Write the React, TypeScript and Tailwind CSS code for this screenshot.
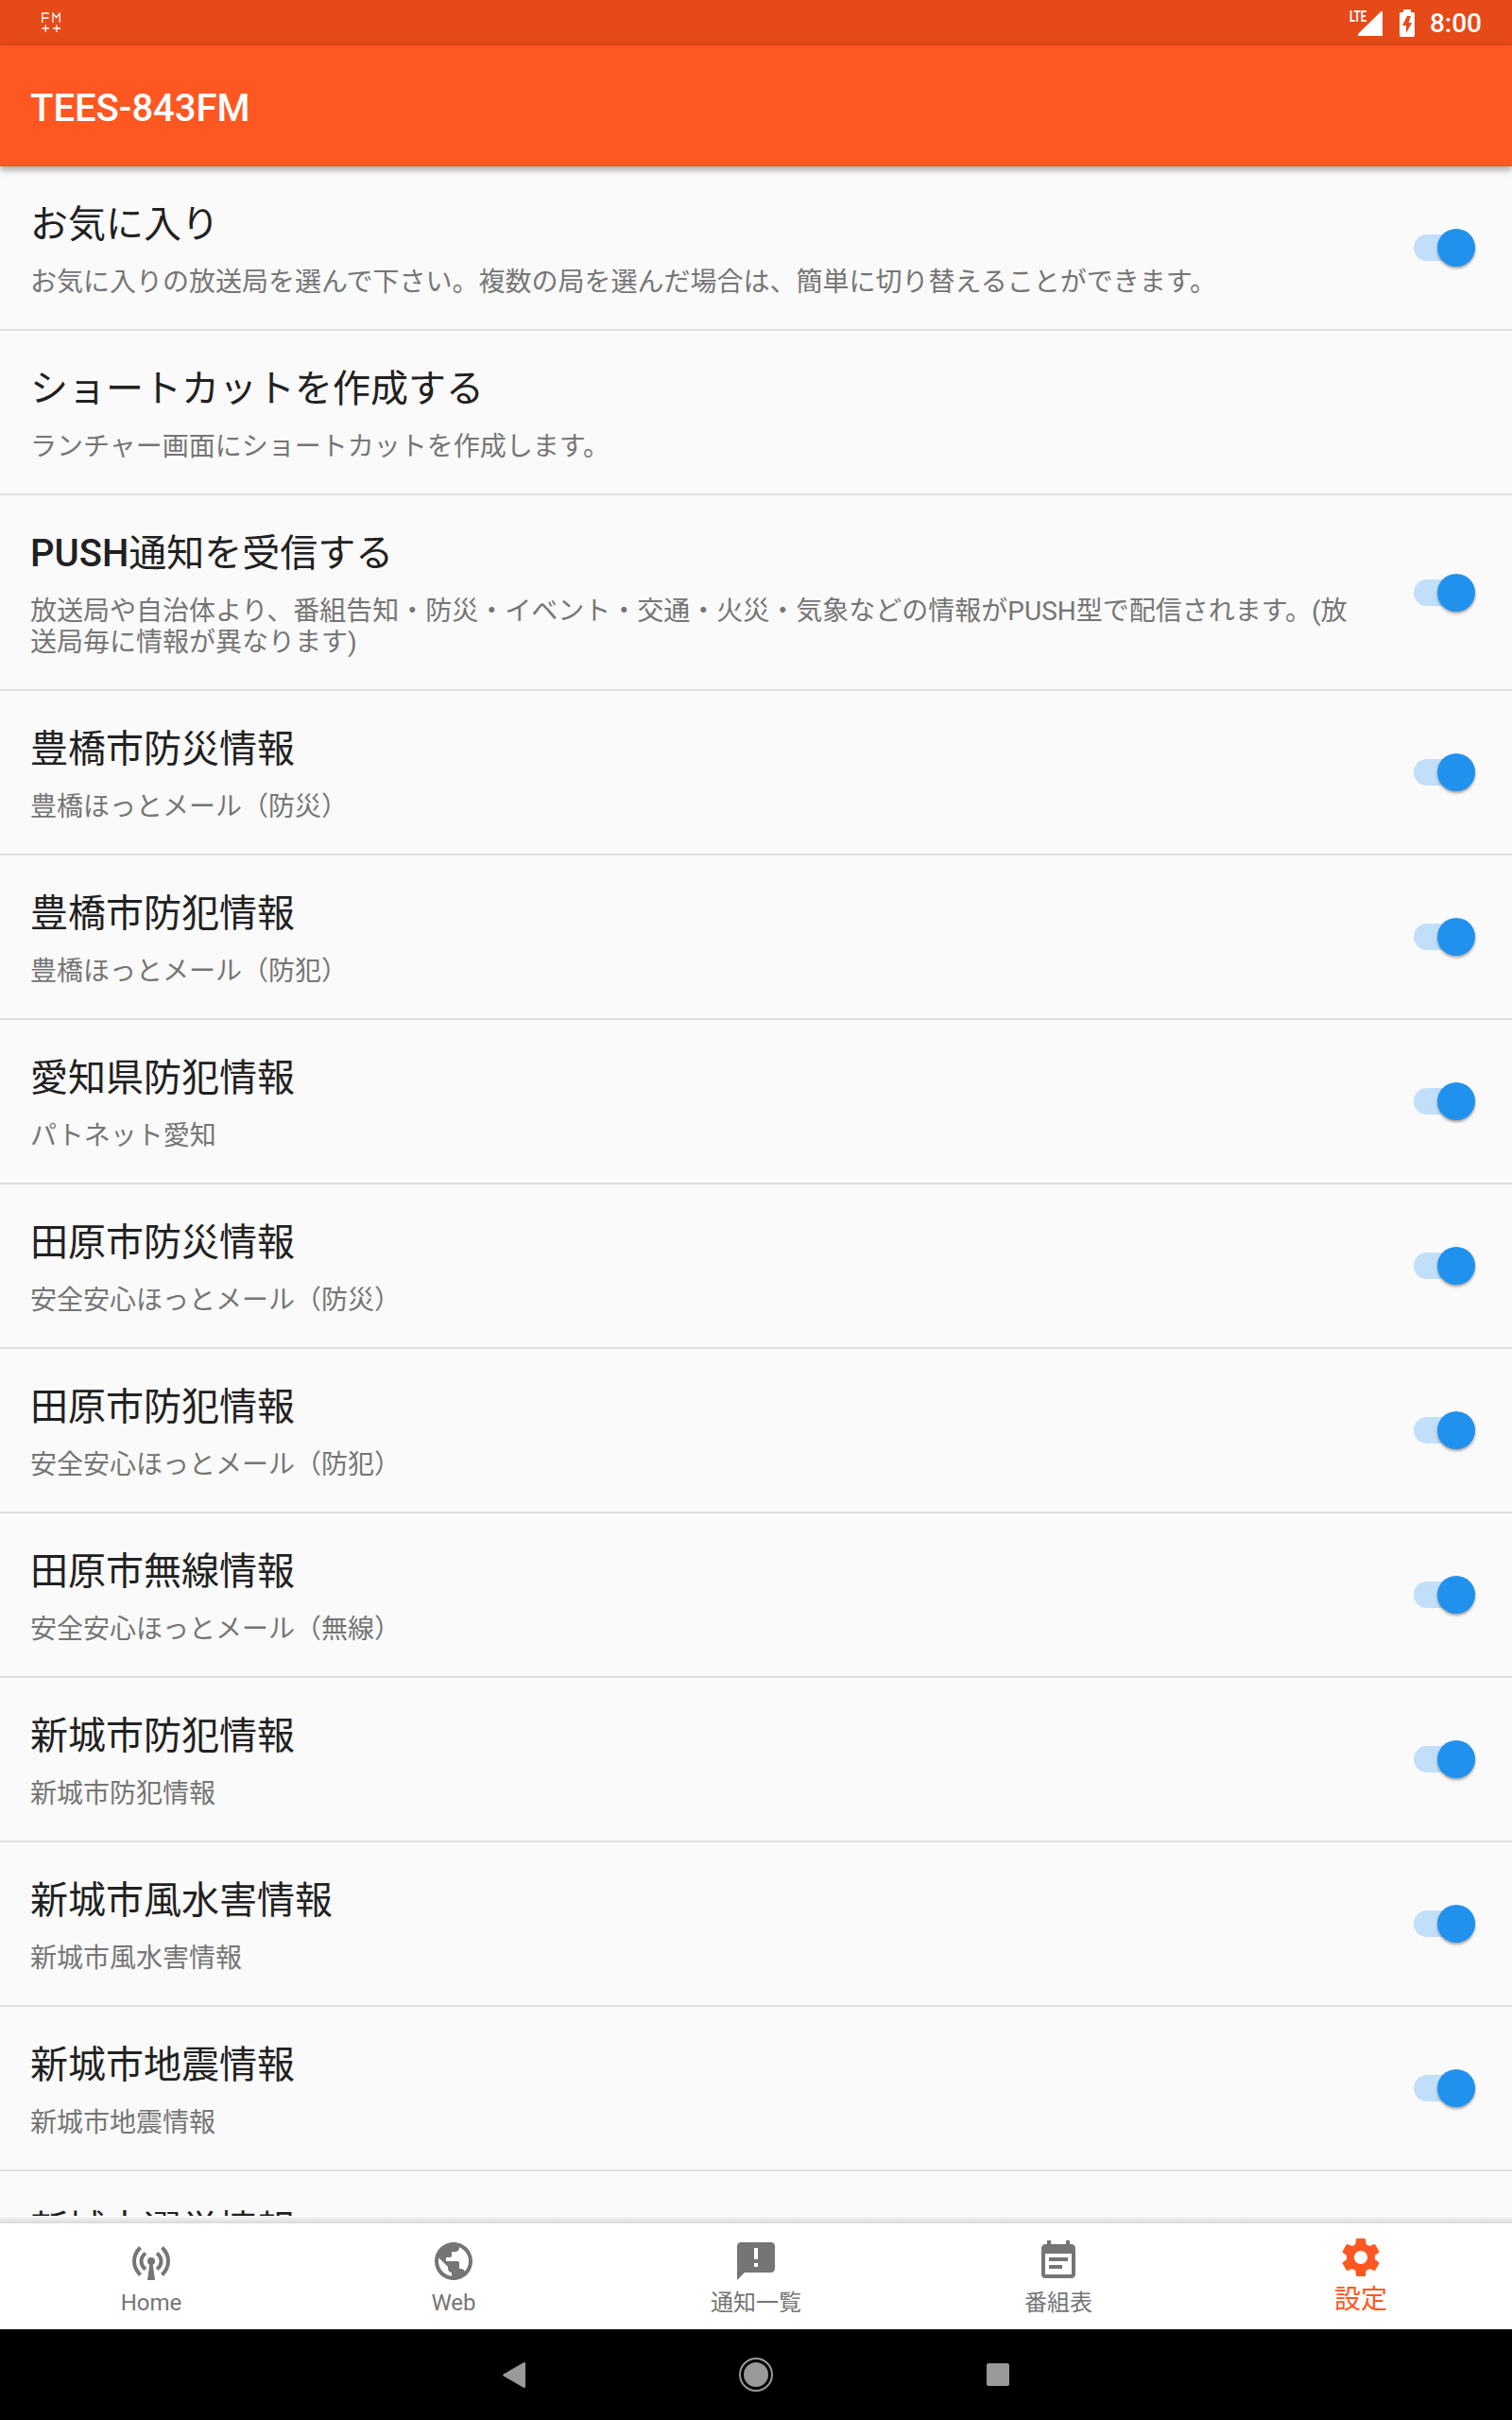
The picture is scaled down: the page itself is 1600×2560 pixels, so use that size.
import { MdAnnouncement, MdEventNote, MdPublic } from 'react-icons/md';
import type { ReactNode } from 'react';

type Setting = { title: ReactNode; summary: string; toggle?: boolean };

const SETTINGS: Setting[] = [
  { title: 'お気に入り', summary: 'お気に入りの放送局を選んで下さい。複数の局を選んだ場合は、簡単に切り替えることができます。', toggle: true },
  { title: 'ショートカットを作成する', summary: 'ランチャー画面にショートカットを作成します。' },
  {
    title: (
      <>
        <span className="font-medium">PUSH</span>通知を受信する
      </>
    ),
    summary: '放送局や自治体より、番組告知・防災・イベント・交通・火災・気象などの情報がPUSH型で配信されます。(放送局毎に情報が異なります)',
    toggle: true,
  },
  { title: '豊橋市防災情報', summary: '豊橋ほっとメール（防災）', toggle: true },
  { title: '豊橋市防犯情報', summary: '豊橋ほっとメール（防犯）', toggle: true },
  { title: '愛知県防犯情報', summary: 'パトネット愛知', toggle: true },
  { title: '田原市防災情報', summary: '安全安心ほっとメール（防災）', toggle: true },
  { title: '田原市防犯情報', summary: '安全安心ほっとメール（防犯）', toggle: true },
  { title: '田原市無線情報', summary: '安全安心ほっとメール（無線）', toggle: true },
  { title: '新城市防犯情報', summary: '新城市防犯情報', toggle: true },
  { title: '新城市風水害情報', summary: '新城市風水害情報', toggle: true },
  { title: '新城市地震情報', summary: '新城市地震情報', toggle: true },
  { title: '新城市選挙情報', summary: '新城市選挙情報', toggle: true },
];

function Toggle() {
  return (
    <div className="flex h-7 w-[65px] shrink-0 items-center justify-end rounded-full bg-[#c1dff8]">
      <div className="size-10 shrink-0 rounded-full bg-[#2191ee] shadow-[0_2px_3px_rgba(0,0,0,0.35)]" />
    </div>
  );
}

function SettingRow({ title, summary, toggle }: Setting) {
  return (
    <div className="flex shrink-0 items-center justify-between border-b-2 border-[#dfdfdf] pr-[39px] pl-8">
      <div className="w-[1408px] pt-[38px] pb-[33px]">
        <div className="mb-[21px] text-[40px] leading-[47px] text-[#212121]">{title}</div>
        <div className="text-[28px] leading-[33px] text-[#757575]">{summary}</div>
      </div>
      {toggle && <Toggle />}
    </div>
  );
}

function StatusBar() {
  return (
    <div className="flex h-12 shrink-0 items-center justify-between bg-[#e64a19] pr-8 pl-11 text-white">
      <svg className="h-[22px] w-5" viewBox="0 0 20 22" fill="none" stroke="currentColor" strokeWidth="1.3">
        <path d="M.8 11V1H8M.8 6H7.5M12 11V1.2L15.600 5.500L19.200 1.200V11M0.500 17H8M4.300 13.200V21M12 17H20M16 13.200V21" />
      </svg>
      <div className="flex items-center">
        <svg className="mr-[18px] h-7 w-[35px] overflow-visible" viewBox="0 0 35 28" fill="currentColor">
          <text x="0" y="12.500" fontSize="17" fontWeight="700" textLength="18" lengthAdjust="spacingAndGlyphs">LTE</text>
          <path d="M9 28V26L33 2.500Q35 1 35 3V28Z" />
        </svg>
        <svg className="mr-4 h-[29px] w-4" viewBox="0 0 16 29" fill="currentColor" fillRule="evenodd">
          <path d="M4 0H12V3H14.500Q16 3 16 4.500V27.500Q16 29 14.500 29H1.500Q0 29 0 27.500V4.500Q0 3 1.500 3H4ZM8 7L3 17H7V25L13 14H9.500L12 7Z" />
        </svg>
        <span className="pt-0.5 text-[28px] leading-8 font-medium">8:00</span>
      </div>
    </div>
  );
}

function AntennaIcon() {
  return (
    <svg className="size-12" viewBox="0 0 48 48" fill="none" stroke="currentColor" strokeWidth="4">
      <path d="M12.500 9.500Q6 16 6 24T12.500 38.500M35.500 9.500Q42 16 42 24T35.500 38.500" />
      <path d="M18 15.500Q13.500 19 13.500 24T18 32.500M30 15.500Q34.500 19 34.500 24T30 32.500" />
      <circle cx="24" cy="24" r="4" fill="currentColor" stroke="none" />
      <path d="M22.500 26H25.500L28 44H20Z" fill="currentColor" stroke="none" />
    </svg>
  );
}

function GearIcon() {
  return (
    <svg className="size-12" viewBox="0 0 24 24" fill="currentColor">
      <path d="M19.430 12.980c.040-.320.070-.640.070-.980s-.030-.660-.070-.980l2.110-1.650c.190-.150.240-.420.120-.640l-2-3.460c-.120-.220-.390-.300-.610-.220l-2.490 1c-.520-.400-1.080-.730-1.690-.980l-.380-2.650C14.460 2.180 14.250 2 14 2h-4c-.250 0-.460.180-.490.420l-.380 2.650c-.610.250-1.170.590-1.690.980l-2.490-1c-.230-.090-.490 0-.610.220l-2 3.460c-.130.220-.070.490.120.640l2.110 1.650c-.040.320-.070.650-.070.980s.030.660.070.980l-2.110 1.650c-.190.150-.240.420-.120.640l2 3.460c.120.220.390.300.610.220l2.490-1c.520.400 1.080.730 1.690.980l.380 2.650c.030.240.240.420.490.420h4c.250 0 .460-.180.490-.420l.380-2.650c.610-.250 1.170-.590 1.690-.980l2.490 1c.230.090.490 0 .610-.220l2-3.460c.120-.220.070-.490-.120-.640l-2.110-1.650zM12 15.500c-1.930 0-3.500-1.570-3.500-3.500s1.570-3.500 3.500-3.500 3.500 1.570 3.500 3.500-1.570 3.500-3.500 3.500z" />
    </svg>
  );
}

const TABS = [
  { label: 'Home', icon: <AntennaIcon /> },
  { label: 'Web', icon: <MdPublic className="size-12" /> },
  { label: '通知一覧', icon: <MdAnnouncement className="size-12" /> },
  { label: '番組表', icon: <MdEventNote className="size-12" /> },
];

function BottomTabs() {
  return (
    <nav className="grid h-28 shrink-0 grid-cols-5 bg-white text-[#757575]">
      {TABS.map(({ label, icon }) => (
        <div key={label} className="flex flex-col items-center pt-4">
          {icon}
          <span className="mt-1.5 text-2xl leading-7">{label}</span>
        </div>
      ))}
      <div className="flex flex-col items-center pt-3 text-[#ff5722]">
        <GearIcon />
        <span className="mt-[5px] text-[28px] leading-8">設定</span>
      </div>
    </nav>
  );
}

function SystemNav() {
  return (
    <div className="flex h-24 shrink-0 items-center justify-center bg-black text-[#999]">
      <svg className="h-[27px] w-6" viewBox="0 0 24 27" fill="currentColor">
        <path d="M22 .3Q24 -.5 24 1.500V25.500Q24 27.500 22 26.700L.8 14.500Q-.4 13.500 .8 12.500Z" />
      </svg>
      <div className="mr-[226px] ml-[226px] flex size-9 items-center justify-center rounded-full border-2 border-[#999]">
        <div className="size-[26px] rounded-full bg-[#999]" />
      </div>
      <div className="size-6 rounded-xs bg-[#999]" />
    </div>
  );
}

export default function App() {
  return (
    <div className="flex h-[2560px] w-[1600px] flex-col overflow-hidden bg-[#fafafa] font-['Roboto','Noto_Sans_CJK_JP',sans-serif]" lang="ja">
      <StatusBar />
      <header className="z-10 flex h-32 shrink-0 items-center bg-[#ff5722] pt-1 pl-8 shadow-[0_3px_8px_rgba(0,0,0,0.4)]">
        <h1 className="text-[40px] leading-[47px] font-medium text-white">TEES-843FM</h1>
      </header>
      <main className="flex min-h-0 flex-1 flex-col overflow-hidden">
        {SETTINGS.map((setting, i) => (
          <SettingRow key={i} {...setting} />
        ))}
      </main>
      <div className="h-2 shrink-0 bg-linear-to-b from-[#fafafa] to-[#d9d9d9]" />
      <BottomTabs />
      <SystemNav />
    </div>
  );
}
